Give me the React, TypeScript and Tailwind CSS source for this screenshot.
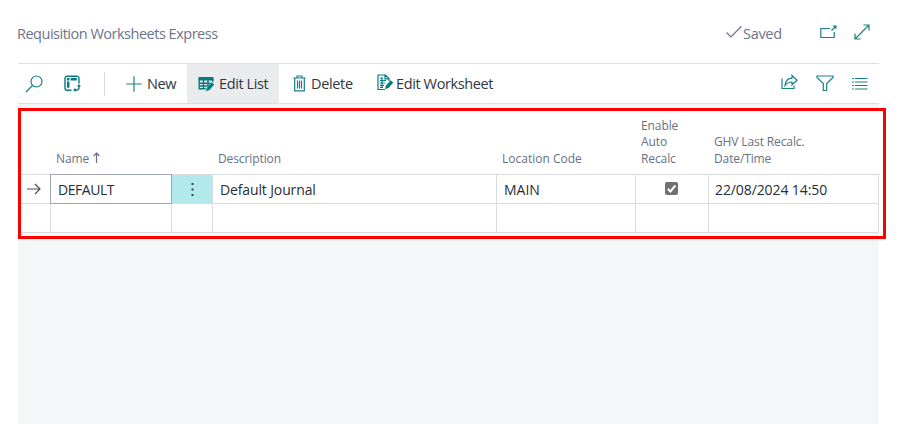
import type { ReactNode } from 'react';

function Icon({ className, box, children }: { className: string; box: string; children: ReactNode }) {
  return (
    <svg viewBox={box} className={`shrink-0 ${className}`} fill="none" stroke="currentColor" strokeWidth="1.2">
      {children}
    </svg>
  );
}

const PENCIL = 'M8 15.300 8.800 11.800 13.500 6.300 16.300 8.600 11.500 14Z';

function TitleBar() {
  return (
    <header className="flex h-[63px] items-center pt-[5px] text-[#6b7588]">
      <h1 className="-ml-px w-[709px] text-[14.5px] tracking-[-0.49px]">Requisition Worksheets Express</h1>
      <Icon box="0 0 16 14" className="-mt-[4px] h-[14px] w-4">
        <path d="M.5 7.5 5 12 15.2 1.5" />
      </Icon>
      <span className="ml-[1px] w-[77px] text-[14.5px] tracking-[-0.3px]">Saved</span>
      <Icon box="0 0 17 14" className="-mt-[5px] h-[14px] w-[17px] text-[#198085]">
        <path d="M10 3.5H.8v9h13.4V7M11.500 5.500 16 1" />
        <path d="M12.500 .5H16.500V4.500Z" fill="currentColor" stroke="none" />
      </Icon>
      <Icon box="0 0 16 16" className="ml-[17px] -mt-[4px] h-4 w-4 text-[#198085]">
        <path d="M1 15 15 1M9.5 1H15v5.5M1 9.5V15h5.5" />
      </Icon>
    </header>
  );
}

function Toolbar() {
  return (
    <nav className="flex h-[41px] w-[861px] items-center border-y border-[#dcdee1] text-[14.5px] text-[#30363f]">
      <Icon box="0 0 18 18" className="ml-[7px] h-[18px] w-[18px] text-[#198085]">
        <circle cx="11.5" cy="6.5" r="5.5" />
        <path d="M7.5 10.5 1 17" />
      </Icon>
      <Icon box="0 0 17 17" className="ml-[21px] h-[17px] w-[17px] text-[#087b81]">
        <path d="M15 8.500V3.500A2.200 2.200 0 0 0 12.800 1.200H3.200A2.200 2.200 0 0 0 1 3.400V13a2.200 2.200 0 0 0 2.200 2.200H7.500M15 10.500v2a2.200 2.200 0 0 1-2.200 2.500h-2.500" strokeWidth="1.400" />
        <path d="M13 11.500 15 9l2 2.500ZM11.500 13v4L9 15Z" fill="currentColor" stroke="none" />
        <path d="M3 4.300h2.400M6.600 4.300h6.200M4.200 6.600v6.200" strokeWidth="2.400" />
      </Icon>
      <div className="ml-[23px] h-6 w-px bg-[#d5d8dc]" />
      <Icon box="0 0 16 16" className="ml-[21px] h-4 w-4 text-[#198085]">
        <path d="M8 .3v15.400M.3 8h15.400" />
      </Icon>
      <span className="ml-[5px] w-[40px] pt-px tracking-[-0.4px]">New</span>
      <div className="flex h-full w-[92px] items-center bg-[#eaebed]">
        <Icon box="0 0 17 16" className="ml-[11px] h-4 w-[17px] text-[#087b81]">
          <rect x=".5" y="1" width="15" height="3.500" fill="currentColor" stroke="none" />
          <path d="M1.200 3v9.800h6.500M1 7.200h11.500M1 10h8.500M5.500 3v10M10 3v7M14.800 3v3" strokeWidth="1.400" />
          <path d={PENCIL} fill="currentColor" stroke="none" />
        </Icon>
        <span className="ml-[4px] whitespace-nowrap pt-px tracking-[-0.4px]">Edit List</span>
      </div>
      <Icon box="0 0 13 17" className="ml-[14px] h-[17px] w-[13px] text-[#198085]">
        <path d="M.3 3h12.400M4 3V1h5v2M1.700 3v12.900h9.600V3M4.500 5.500v8M6.500 5.500v8M8.500 5.500v8" />
      </Icon>
      <span className="ml-[5px] w-[66px] pt-px tracking-[-0.35px]">Delete</span>
      <Icon box="0 0 17 17" className="-mt-[2px] h-[17px] w-[17px] text-[#087b81]">
        <path d="M8 15.500H1V1h7.500l3.500 3.500v2.500M8 1v3.800h4M3 4h3M3 6.500h6M3 9h5M3 11.500h4M3 13.500h3M5 4v9" />
        <path d={PENCIL} fill="currentColor" stroke="none" />
      </Icon>
      <span className="ml-[2px] w-[385px] pt-px tracking-[-0.38px]">Edit Worksheet</span>
      <Icon box="0 0 17 16" className="-mt-[3px] h-4 w-[17px] text-[#198085]">
        <path d="M1 4.500v10h12v-3M11 1.500v2.700C6.500 4.300 4.500 7 4 11.500 6 8.800 8 8 11 8v2.800L16 6.200Z" />
      </Icon>
      <Icon box="0 0 18 16" className="ml-[18px] -mt-[2px] h-4 w-[18px] text-[#198085]">
        <path d="M1 1h16v1.500l-6.300 6v7H7.300v-7L1 2.500Z" />
      </Icon>
      <Icon box="0 0 16 13" className="ml-[18px] h-[13px] w-4 text-[#198085]">
        <path d="M0 1.500h2M3 1.500H15.500M0 5h2M3 5H15.500M0 8.500h2M3 8.500H15.500M0 12h2M3 12H15.500" />
      </Icon>
    </nav>
  );
}

const COLUMNS = 'grid grid-cols-[33px_121px_41px_284px_139px_73px_170px]';

function Worksheet() {
  return (
    <main className="relative h-[320px] w-[861px] bg-[#f5f6f8] pt-[4px]">
      <div className={`${COLUMNS} h-[66px] items-end bg-white pb-[7px] text-[12px] leading-[16.500px] text-[#677182]`}>
        <span className="col-start-2 flex items-center pl-[5px] tracking-[-0.1px]">
          Name
          <Icon box="0 0 7 11" className="ml-[4px] -mt-[2px] h-[11px] w-[7px]">
            <path d="M3.500 11V1M.6 4 3.500 1l2.900 3" />
          </Icon>
        </span>
        <span className="col-start-4 pl-[5px] tracking-[-0.1px]">Description</span>
        <span className="pl-[5px]">Location Code</span>
        <span className="pl-[5px] tracking-[-0.1px]">Enable<br />Auto<br />Recalc</span>
        <span className="pl-[5px] tracking-[-0.12px]">GHV Last Recalc.<br />Date/Time</span>
      </div>
      <div className={`${COLUMNS} h-[30px] border-y border-[#d9dbdf] bg-white text-[14px] text-[#272d35] [&>*]:border-r [&>*]:border-[#d9dbdf]`}>
        <div className="flex items-center justify-center">
          <Icon box="0 0 14 12" className="h-3 w-[14px] text-[#4a4f56]">
            <path d="M0 6h13M8 1l5 5-5 5" />
          </Icon>
        </div>
        <div className="-my-px -ml-px flex items-center border border-[#9fa5b2]! pl-[7px] pt-[1px] tracking-[-0.450px]">DEFAULT</div>
        <div className="flex items-center justify-center bg-[#b2e9ec]">
          <svg viewBox="0 0 3 15" className="h-[15px] w-[3px]" fill="#30464a">
            <path d="M.5 1h2v2h-2zM.5 6.500h2v2h-2zM.5 12h2v2h-2z" />
          </svg>
        </div>
        <div className="flex items-center pl-[7px] pt-[1px] tracking-[-0.130px]">Default Journal</div>
        <div className="flex items-center pl-[7px] pt-[1px]">MAIN</div>
        <div className="flex items-center justify-center">
          <svg viewBox="0 0 13 13" className="-ml-px -mt-px h-[13px] w-[13px]">
            <rect width="13" height="13" rx="2" fill="#717171" />
            <path d="m2.800 6.800 2.600 2.700 5-6" fill="none" stroke="white" strokeWidth="2" />
          </svg>
        </div>
        <div className="flex items-center pl-[6px] tracking-[-0.1px]">22/08/2024 14:50</div>
      </div>
      <div className={`${COLUMNS} h-[29px] border-b border-[#d9dbdf] bg-white [&>*]:border-r [&>*]:border-[#d9dbdf]`}>
        <div /><div /><div /><div /><div /><div /><div />
      </div>
      <div className="absolute left-0 top-[4px] h-[131px] w-[868px] border-[3px] border-[#ff0000]" />
    </main>
  );
}

export default function App() {
  return (
    <div className="h-[424px] w-[900px] overflow-hidden bg-white pl-[18px] font-['Open_Sans','Noto_Sans',sans-serif]">
      <TitleBar />
      <Toolbar />
      <Worksheet />
    </div>
  );
}
